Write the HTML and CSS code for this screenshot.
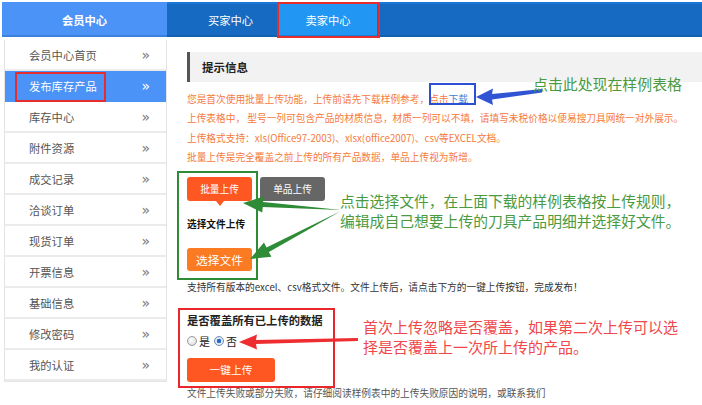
FILE: index.html
```html
<!DOCTYPE html>
<html lang="zh-CN">
<head>
<meta charset="utf-8">
<title>发布库存产品</title>
<link rel="stylesheet" href="styles.css">
</head>
<body>
<div class="page">
  <nav class="topbar">
    <div class="tab tab-member">会员中心</div>
    <div class="tab tab-buyer">买家中心</div>
    <div class="tab tab-seller">卖家中心</div>
  </nav>
  <div class="main">
    <aside class="sidebar">
      <div class="side-item"><span>会员中心首页</span><span class="chev">»</span></div>
      <div class="side-item active"><span>发布库存产品</span><span class="chev">»</span></div>
      <div class="side-item"><span>库存中心</span><span class="chev">»</span></div>
      <div class="side-item"><span>附件资源</span><span class="chev">»</span></div>
      <div class="side-item"><span>成交记录</span><span class="chev">»</span></div>
      <div class="side-item"><span>洽谈订单</span><span class="chev">»</span></div>
      <div class="side-item"><span>现货订单</span><span class="chev">»</span></div>
      <div class="side-item"><span>开票信息</span><span class="chev">»</span></div>
      <div class="side-item"><span>基础信息</span><span class="chev">»</span></div>
      <div class="side-item"><span>修改密码</span><span class="chev">»</span></div>
      <div class="side-item"><span>我的认证</span><span class="chev">»</span></div>
    </aside>
    <section class="content">
      <div class="panel-head">提示信息</div>
      <div class="notice">
        <p>您是首次使用批量上传功能，上传前请先下载样例参考，点击<span class="link">下载</span></p>
        <p>上传表格中， 型号一列可包含产品的材质信息，材质一列可以不填，请填写未税价格以便易搜刀具网统一对外展示。</p>
        <p>上传格式支持：xls(Office97-2003)、xlsx(office2007)、csv等EXCEL文档。</p>
        <p>批量上传是完全覆盖之前上传的所有产品数据，单品上传视为新增。</p>
      </div>
      <div class="btn-row">
        <div class="btn btn-batch">批量上传</div>
        <div class="btn btn-single">单品上传</div>
      </div>
      <div class="label-file">选择文件上传</div>
      <div class="btn btn-choose">选择文件</div>
      <p class="support">支持所有版本的excel、csv格式文件。文件上传后，请点击下方的一键上传按钮，完成发布！</p>
      <div class="cover-title">是否覆盖所有已上传的数据</div>
      <div class="radios">
        <span class="radio"></span><span class="radio-label">是</span>
        <span class="radio checked"></span><span class="radio-label">否</span>
      </div>
      <div class="btn btn-upload">一键上传</div>
      <p class="fail">文件上传失败或部分失败，请仔细阅读样例表中的上传失败原因的说明，或联系我们</p>
    </section>
  </div>

  <div class="mark mark-tab"></div>
  <div class="mark mark-side"></div>
  <div class="mark mark-blue"></div>
  <div class="mark mark-green"></div>
  <div class="mark mark-cover"></div>

  <svg class="arrows" width="702" height="405" viewBox="0 0 702 405">
    <polygon fill="#2f55d4" points="476,97 493,88.5 492,94 542,89 542,92.5 492,99.5 493,105"/>
    <polygon fill="#2e8b36" points="243,203 263.6,196.6 263.1,202.1 341,210 262.7,207.1 262.3,212.6"/>
    <polygon fill="#2e8b36" points="250,259 271.4,256.8 268.9,251.9 341,211 266.5,247.5 264,242.6"/>
    <polygon fill="#ee2d30" points="239,342 257,334.5 256,340 358,338 358,341 256,344 257,349.5"/>
  </svg>

  <div class="note note-green note-download">点击此处现在样例表格</div>
  <div class="note note-green note-file">点击选择文件，在上面下载的样例表格按上传规则，<br>编辑成自己想要上传的刀具产品明细并选择好文件。</div>
  <div class="note note-red note-cover">首次上传忽略是否覆盖，如果第二次上传可以选<br>择是否覆盖上一次所上传的产品。</div>
</div>
</body>
</html>
```
FILE: styles.css
```css
* {
  box-sizing: border-box;
  margin: 0;
  padding: 0;
}

body {
  margin: 0;
  background: #fff;
  font-family: "Noto Sans CJK SC", "Microsoft YaHei", sans-serif;
  color: #333;
  width: 702px;
  height: 405px;
  overflow: hidden;
}

.page {
  position: relative;
  width: 702px;
  height: 405px;
  padding: 2px 0 0 2px;
}

/* top navigation */
.topbar {
  display: flex;
  height: 35px;
  background: linear-gradient(#1a77d8 0, #1a77d8 2px, #166ac2 2px, #166ac2 33px, #1260b0 33px);
}

.tab {
  height: 35px;
  display: flex;
  align-items: center;
  justify-content: center;
  color: #fff;
  font-size: 11.3px;
}

.tab-member {
  width: 165px;
  background: #4b93f6;
  font-weight: bold;
  box-shadow: inset 0 -2px 0 #3b80dc;
}

.tab-buyer {
  width: 97px;
  margin-left: 15px;
}

.tab-seller {
  width: 98px;
  background: #2196f3;
  box-shadow: inset 0 -2px 0 #1a7fd6;
}

/* main layout */
.main {
  display: flex;
  margin-top: 3px;
}

.sidebar {
  width: 163px;
  margin-left: 2px;
  border: 1px solid #e4e4e4;
  border-top: 0;
  align-self: flex-start;
}

.side-item {
  height: 31px;
  border-bottom: 2px solid #ebebeb;
  display: flex;
  align-items: center;
  justify-content: space-between;
  padding: 0 16px 0 24px;
  font-size: 11.3px;
  color: #555;
}

.side-item.active {
  background: #4b93f6;
  color: #fff;
  border-bottom-color: #4b93f6;
}

.chev {
  font-size: 14px;
  line-height: 14px;
  color: #777;
  font-family: "DejaVu Sans", sans-serif;
}

.side-item.active .chev {
  color: #fff;
}

.content {
  flex: 1;
  margin-left: 20px;
  padding-top: 12px;
}

.panel-head {
  height: 30px;
  background: #f2f2f2;
  border-left: 3px solid #555;
  padding-left: 12px;
  display: flex;
  align-items: center;
  font-weight: bold;
  font-size: 11.5px;
  color: #222;
}

.notice {
  margin-top: 8px;
  font-size: 9.7px;
  line-height: 19.3px;
  color: #f67a3c;
  white-space: nowrap;
}

.notice .link {
  color: #3c7fd6;
}

.btn-row {
  display: flex;
  gap: 8px;
  margin-top: 9.5px;
}

.btn {
  height: 24px;
  width: 65px;
  border-radius: 3px;
  color: #fff;
  display: flex;
  align-items: center;
  justify-content: center;
  font-size: 9.7px;
}

.btn-batch {
  background: #ff5722;
  position: relative;
}

.btn-batch::after {
  content: "";
  position: absolute;
  left: 50%;
  bottom: -5px;
  margin-left: -4px;
  border-left: 4px solid transparent;
  border-right: 4px solid transparent;
  border-top: 5px solid #ff5722;
}

.btn-single {
  background: #666;
}

.label-file {
  margin-top: 13px;
  font-weight: bold;
  font-size: 9.7px;
  line-height: 20px;
  color: #111;
}

.btn-choose {
  margin-top: 14px;
  height: 23px;
  background: #fb7b22;
  font-size: 11.7px;
}

.support {
  margin-top: 8px;
  font-size: 9.7px;
  line-height: 16px;
  color: #333;
  white-space: nowrap;
}

.cover-title {
  margin-top: 17px;
  font-weight: bold;
  font-size: 11.3px;
  line-height: 16px;
  color: #222;
}

.radios {
  margin-top: 5px;
  height: 16px;
  display: flex;
  align-items: center;
}

.radio {
  width: 10px;
  height: 10px;
  border-radius: 50%;
  border: 1px solid #9a9a9a;
  background: radial-gradient(circle at 40% 35%, #fdfdfd, #d6d6d6);
  margin-right: 2px;
}

.radio.checked {
  border-color: #6f8fb8;
  background: radial-gradient(circle, #1c5fc0 0, #2a73d4 2px, #e8eef6 2.6px, #cfd9e6 5px);
}

.radio-label {
  font-size: 11px;
  color: #222;
  margin-right: 4px;
}

.btn-upload {
  margin-top: 9px;
  width: 88px;
  background: #ff5722;
  font-size: 10.7px;
}

.fail {
  margin-top: 3px;
  font-size: 9.7px;
  line-height: 16px;
  color: #555;
  white-space: nowrap;
}

/* annotations drawn over the screenshot */
.mark {
  position: absolute;
  border: 2px solid #e52d2d;
}

.mark-tab {
  left: 277px;
  top: 2px;
  width: 103px;
  height: 36px;
}

.mark-side {
  left: 15px;
  top: 72px;
  width: 91px;
  height: 30px;
}

.mark-blue {
  left: 429px;
  top: 83px;
  width: 47px;
  height: 22px;
  border-color: #2d4fd3;
}

.mark-green {
  left: 177px;
  top: 171px;
  width: 81px;
  height: 109px;
  border-color: #2e8b36;
}

.mark-cover {
  left: 178px;
  top: 308px;
  width: 157px;
  height: 80px;
  border-color: #e8262b;
}

.arrows {
  position: absolute;
  left: 0;
  top: 0;
  pointer-events: none;
}

.note {
  position: absolute;
  font-size: 14.9px;
  line-height: 20px;
  white-space: nowrap;
}

.note-green {
  color: #4a9a3f;
}

.note-red {
  color: #f0474a;
}

.note-download {
  left: 533px;
  top: 74px;
}

.note-file {
  left: 340px;
  top: 191px;
  font-size: 14.8px;
}

.note-cover {
  left: 363px;
  top: 317px;
  font-size: 15px;
}
```
